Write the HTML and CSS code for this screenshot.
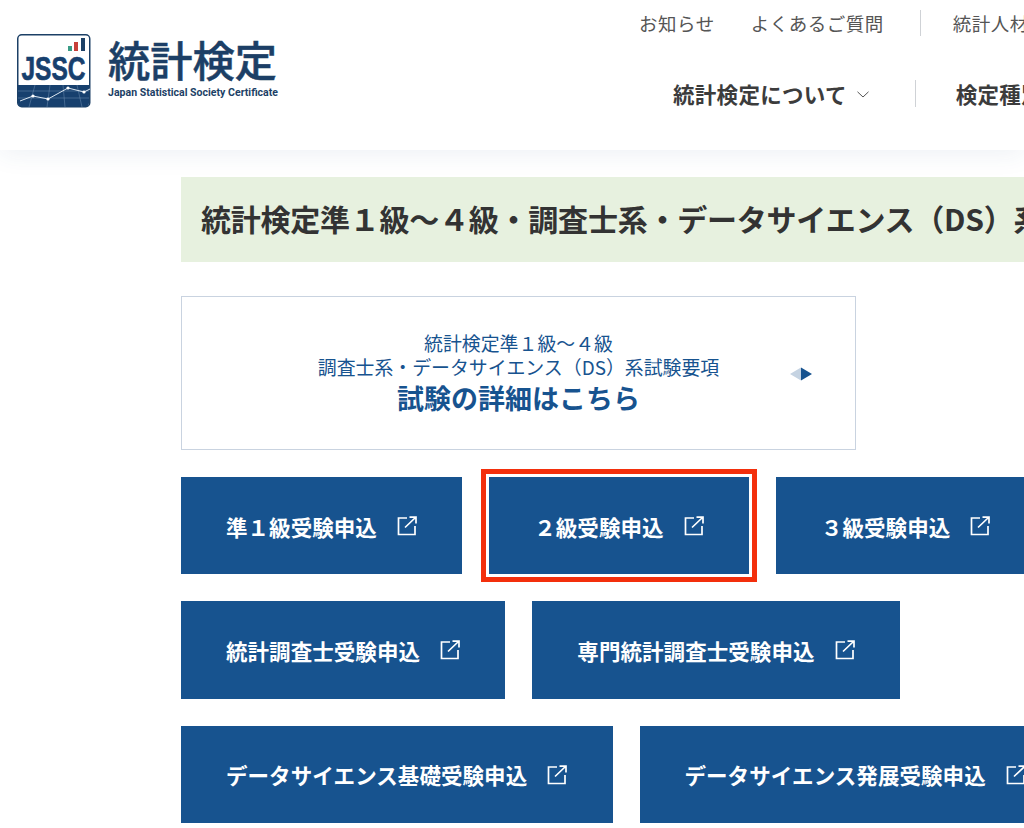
FILE: index.html
```html
<!DOCTYPE html>
<html lang="ja">
<head>
<meta charset="utf-8">
<title>統計検定</title>
<link rel="stylesheet" href="styles.css">
</head>
<body>
<header class="header">
  <a class="logo" href="#">
    <svg width="262" height="74" viewBox="0 0 262 74" aria-label="統計検定">
      <rect x="0.75" y="0.75" width="72" height="72" rx="4" fill="#fff" stroke="#1c4066" stroke-width="1.5"/>
      <path d="M1 51h71v18a3.500 3.500 0 0 1-3.500 3.500h-64A3.500 3.500 0 0 1 1 69z" fill="#17406e"/>
      <rect x="51" y="12" width="4" height="5" fill="#3a9c86"/>
      <rect x="57" y="8" width="4" height="9" fill="#c8403a"/>
      <rect x="64" y="4" width="4" height="13" fill="#1c4066"/>
      <text class="logo-mark" x="36.500" y="46" text-anchor="middle" textLength="64" lengthAdjust="spacingAndGlyphs">JSSC</text>
      <path d="M1 57h71M1 64h71M18 51l-6 22M33 51l-3 22M46 51l2 22M60 51l5 22" stroke="#6f8fb0" stroke-width=".5" fill="none"/>
      <path d="M3 67l13-5 15 3 20-11 16 4 6-3" stroke="#dbe6f0" stroke-width="1" fill="none"/>
      <circle cx="16" cy="62" r="1.600" fill="#fff"/><circle cx="31" cy="65" r="1.600" fill="#fff"/><circle cx="51" cy="54" r="1.600" fill="#fff"/><circle cx="67" cy="58" r="1.600" fill="#fff"/>
      <text class="logo-name" x="91" y="43" textLength="169" lengthAdjust="spacingAndGlyphs">統計検定</text>
      <text class="logo-sub" x="91" y="62" textLength="170" lengthAdjust="spacingAndGlyphs">Japan Statistical Society Certificate</text>
    </svg>
  </a>
  <nav class="nav">
    <ul class="nav-sub">
      <li><a href="#">お知らせ</a></li>
      <li><a href="#">よくあるご質問</a></li>
      <li class="nav-sep"><a href="#">統計人材バンク</a></li>
    </ul>
    <ul class="nav-main">
      <li class="has-menu"><a href="#">統計検定について</a>
        <svg class="chevron" width="12" height="7" viewBox="0 0 12 7"><path d="M.5.8 6 6 11.500.8" fill="none" stroke="#555" stroke-width="1"/></svg>
      </li>
      <li class="nav-sep"><a href="#">検定種別</a></li>
    </ul>
  </nav>
</header>
<main class="main">
  <h1 class="title">統計検定準１級～４級・調査士系・データサイエンス（DS）系試験</h1>
  <a class="detail" href="#">
    <span class="detail-text">
      <span class="detail-line">統計検定準１級～４級</span>
      <span class="detail-line">調査士系・データサイエンス（DS）系試験要項</span>
      <strong class="detail-strong">試験の詳細はこちら</strong>
    </span>
    <svg class="detail-arrow" width="22" height="14" viewBox="0 0 22 14"><path d="M0 7l11-6.500v13z" fill="#c5d3e2"/><path d="M11 .5 22 7l-11 6.500z" fill="#17538f"/></svg>
  </a>
  <div class="buttons">
    <div class="row">
      <a class="btn" href="#">準１級受験申込<svg class="ext" viewBox="0 0 20 20"><use href="#ext"/></svg></a>
      <a class="btn btn-marked" href="#">２級受験申込<svg class="ext" viewBox="0 0 20 20"><use href="#ext"/></svg></a>
      <a class="btn" href="#">３級受験申込<svg class="ext" viewBox="0 0 20 20"><use href="#ext"/></svg></a>
    </div>
    <div class="row">
      <a class="btn" href="#">統計調査士受験申込<svg class="ext" viewBox="0 0 20 20"><use href="#ext"/></svg></a>
      <a class="btn" href="#">専門統計調査士受験申込<svg class="ext" viewBox="0 0 20 20"><use href="#ext"/></svg></a>
    </div>
    <div class="row">
      <a class="btn" href="#">データサイエンス基礎受験申込<svg class="ext" viewBox="0 0 20 20"><use href="#ext"/></svg></a>
      <a class="btn" href="#">データサイエンス発展受験申込<svg class="ext" viewBox="0 0 20 20"><use href="#ext"/></svg></a>
    </div>
  </div>
</main>
<svg class="defs" width="0" height="0">
  <symbol id="ext" viewBox="0 0 20 20">
    <path d="M10 2H1.500V18.500H18V10M8 11.500 18.500 1.500M12.500 1.200H19V7.500" fill="none" stroke="#fff" stroke-width="1.700"/>
  </symbol>
</svg>
</body>
</html>
```
FILE: styles.css
```css
* { box-sizing: border-box; }
html, body { margin: 0; padding: 0; height: 828px; overflow: hidden; background: #fff; }
body {
  width: 1024px;
  font-family: "Noto Sans CJK JP", "Noto Sans", sans-serif;
  color: #3c3c3c;
}
a { color: inherit; text-decoration: none; }
ul { list-style: none; margin: 0; padding: 0; }
.defs { position: absolute; }

.header {
  display: flex;
  height: 150px;
  background: #fff;
  padding: 34px 0 0 17px;
  box-shadow: 0 4px 24px rgba(35, 75, 125, .08);
  position: relative;
}
.logo { display: block; flex: none; height: 74px; }
.logo svg { display: block; }
.logo-mark { font: 700 33px "Liberation Sans", sans-serif; fill: #17406e; stroke: #17406e; stroke-width: .7px; }
.logo-name { font: 500 42px "Noto Sans CJK JP", sans-serif; fill: #1c3f66; stroke: #1c3f66; stroke-width: .5px; }
.logo-sub { font: 700 10px "Roboto", sans-serif; fill: #1c3f66; }

.nav { flex: none; white-space: nowrap; margin-top: -34px; }
.nav-sub, .nav-main { display: flex; align-items: center; }
.nav-sub { height: 46px; margin-left: 360px; font-size: 18.500px; letter-spacing: .5px; color: #555; }
.nav-sub li + li { margin-left: 36px; }
.nav-sub .nav-sep { position: relative; margin-left: 69px; }
.nav-sep::before {
  content: "";
  position: absolute;
  left: -33px;
  top: 0;
  bottom: 0;
  width: 1px;
  background: #cfd2d6;
}
.nav-main { height: 46px; margin-top: 24px; margin-left: 394px; font-size: 21.500px; letter-spacing: .3px; font-weight: 700; color: #3c3c3c; }
.has-menu { display: flex; align-items: center; }
.chevron { margin-left: 10px; transform: translateY(1px); }
.nav-main .nav-sep { position: relative; margin-left: 87px; }
.nav-main .nav-sep::before { left: -41px; top: 2px; bottom: 2px; }

.main { padding: 27px 0 0 181px; width: 1400px; }
.title {
  margin: 0;
  height: 85px;
  padding: 0 0 3px 20px;
  display: flex;
  align-items: center;
  background: #e7f1df;
  font-size: 30px;
  letter-spacing: -.24px;
  font-weight: 700;
  color: #333;
  white-space: nowrap;
}

.detail {
  display: flex;
  align-items: center;
  justify-content: center;
  position: relative;
  width: 675px;
  height: 154px;
  margin-top: 34px;
  border: 1px solid #c9d3e0;
  color: #17538f;
  text-align: center;
}
.detail-text { display: flex; flex-direction: column; align-items: center; padding-top: 2px; }
.detail-line { font-size: 18.900px; line-height: 24px; }
.detail-strong { font-size: 27px; line-height: 38px; font-weight: 700; }
.detail-arrow { position: absolute; right: 43px; top: 70px; }

.buttons { display: flex; flex-direction: column; gap: 27px; margin-top: 27px; }
.row { display: flex; gap: 27px; }
.btn {
  display: flex;
  align-items: center;
  height: 97.300px;
  padding: 1px 45.300px 0 45px;
  background: #17538f;
  color: #fff;
  font-size: 21.500px;
  letter-spacing: .06px;
  font-weight: 700;
  white-space: nowrap;
  flex: none;
}
.btn-marked { box-shadow: 0 0 0 3px #fff, 0 0 0 8px #f32f0c; }
.ext { width: 20px; height: 20px; margin-left: 20px; flex: none; }
```
